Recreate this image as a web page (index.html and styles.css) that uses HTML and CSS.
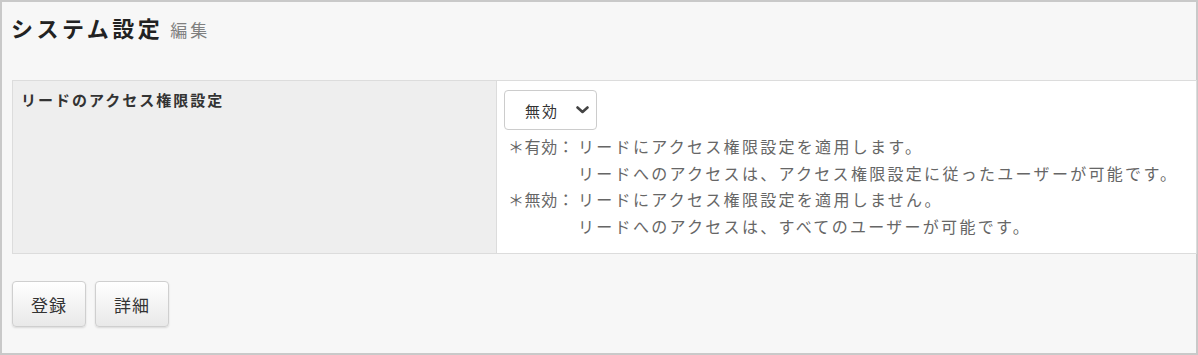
FILE: index.html
```html
<!DOCTYPE html>
<html lang="ja">
<head>
    <meta charset="UTF-8">
    <meta name="viewport" content="width=device-width, initial-scale=1.0">
    <title>システム設定</title>
    <link rel="stylesheet" href="styles.css">
</head>
<body>
    <div class="frame">
        <div class="page-title">
            <h1>システム設定</h1>
            <span class="sub">編集</span>
        </div>
        <table class="setting-table">
            <tr>
                <th>リードのアクセス権限設定</th>
                <td>
                    <div class="select-box">
                        <span>無効</span>
                        <svg width="13" height="8" viewBox="0 0 13 8"><polyline points="1.5,1.5 6.5,6 11.5,1.5" fill="none" stroke="#444" stroke-width="2.6" stroke-linecap="round" stroke-linejoin="round"/></svg>
                    </div>
                    <dl class="notes">
                        <dt>＊有効：</dt>
                        <dd>リードにアクセス権限設定を適用します。<br>リードへのアクセスは、アクセス権限設定に従ったユーザーが可能です。</dd>
                        <dt>＊無効：</dt>
                        <dd>リードにアクセス権限設定を適用しません。<br>リードへのアクセスは、すべてのユーザーが可能です。</dd>
                    </dl>
                </td>
            </tr>
        </table>
        <div class="buttons">
            <button>登録</button>
            <button>詳細</button>
        </div>
    </div>
</body>
</html>
```

FILE: styles.css
```css
body{
    margin:0;
    font-family: "Noto Sans CJK JP", "Noto Sans", sans-serif;
    color:#333;
}
.frame{
    width:1198px;
    height:355px;
    box-sizing:border-box;
    border:2px solid #c9c9c9;
    background-color:#f7f7f7;
    padding-left:9px;
}
.page-title{
    display:flex;
    align-items:baseline;
    height:78px;
    padding-top:9px;
    box-sizing:border-box;
}
.page-title h1{
    margin:0;
    font-size:22px;
    letter-spacing:3.5px;
    font-weight:bold;
    color:#222;
}
.page-title .sub{
    margin-left:7px;
    font-size:17px;
    letter-spacing:3px;
    color:#808080;
}
.setting-table{
    width:100%;
    border-collapse:collapse;
    margin-left:1px;
}
.setting-table th, .setting-table td{
    border:1px solid #dcdcdc;
    vertical-align:top;
    text-align:left;
}
.setting-table th{
    width:484px;
    box-sizing:border-box;
    background-color:#eeeeee;
    padding:8px 8px;
    font-size:15px;
    letter-spacing:2px;
    font-weight:bold;
    color:#333;
}
.setting-table td{
    background-color:#fff;
    padding:9px 7px 14px;
}
.select-box{
    display:flex;
    align-items:center;
    justify-content:space-between;
    width:93px;
    height:40px;
    box-sizing:border-box;
    border:1px solid #cccccc;
    border-radius:4px;
    padding:0 7px 0 20px;
    font-size:15px;
    letter-spacing:2px;
    color:#333;
    background-color:#fff;
}
.notes{
    margin:3px 0 0 4px;
    display:grid;
    grid-template-columns:70px auto;
    font-size:16px;
    line-height:26.5px;
    letter-spacing:2.3px;
    color:#666;
}
.notes dt, .notes dd{
    margin:0;
}
.notes dt{
    white-space:nowrap;
    letter-spacing:0.6px;
}
.buttons{
    display:flex;
    gap:9px;
    margin-top:27px;
    margin-left:1px;
}
.buttons button{
    width:74px;
    height:46px;
    border:1px solid #cfcfcf;
    border-radius:4px;
    background:linear-gradient(#ffffff, #e9e9e9);
    box-shadow:0 1px 2px rgba(0,0,0,0.12);
    font-family:"Noto Sans CJK JP", sans-serif;
    font-size:17px;
    letter-spacing:1px;
    color:#333;
}
```
